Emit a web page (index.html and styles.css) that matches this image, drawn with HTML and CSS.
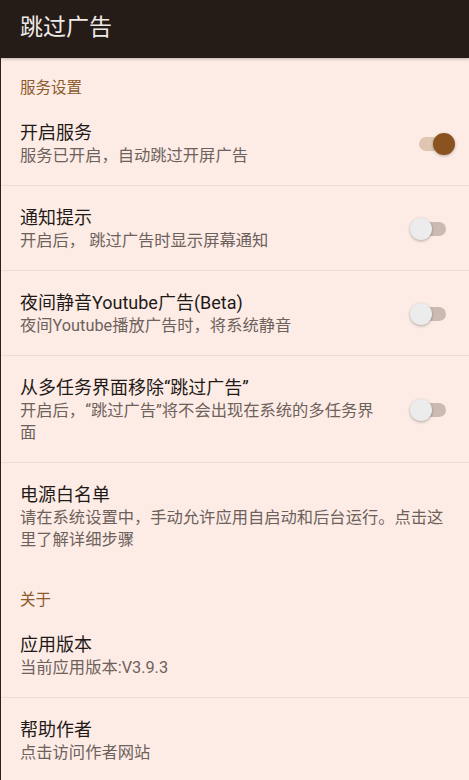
FILE: index.html
```html
<!DOCTYPE html>
<html lang="zh-CN">
<head>
    <meta charset="UTF-8">
    <meta name="viewport" content="width=device-width, initial-scale=1.0">
    <title>跳过广告</title>
    <link rel="stylesheet" href="styles.css">
</head>
<body>
    <div class="app">
        <div class="toolbar">
            <h1>跳过广告</h1>
        </div>

        <div class="prefs">
            <div class="category">服务设置</div>

            <div class="pref">
                <div class="pref-text">
                    <div class="pref-title">开启服务</div>
                    <div class="pref-summary">服务已开启，自动跳过开屏广告</div>
                </div>
                <span class="switch on"><span class="track"></span><span class="thumb"></span></span>
            </div>

            <div class="pref">
                <div class="pref-text">
                    <div class="pref-title">通知提示</div>
                    <div class="pref-summary">开启后， 跳过广告时显示屏幕通知</div>
                </div>
                <span class="switch"><span class="track"></span><span class="thumb"></span></span>
            </div>

            <div class="pref">
                <div class="pref-text">
                    <div class="pref-title">夜间静音Youtube广告(Beta)</div>
                    <div class="pref-summary">夜间Youtube播放广告时，将系统静音</div>
                </div>
                <span class="switch"><span class="track"></span><span class="thumb"></span></span>
            </div>

            <div class="pref">
                <div class="pref-text">
                    <div class="pref-title">从多任务界面移除“跳过广告”</div>
                    <div class="pref-summary">开启后，“跳过广告”将不会出现在系统的多任务界面</div>
                </div>
                <span class="switch"><span class="track"></span><span class="thumb"></span></span>
            </div>

            <div class="pref last">
                <div class="pref-text">
                    <div class="pref-title">电源白名单</div>
                    <div class="pref-summary">请在系统设置中，手动允许应用自启动和后台运行。点击这里了解详细步骤</div>
                </div>
            </div>

            <div class="category">关于</div>

            <div class="pref">
                <div class="pref-text">
                    <div class="pref-title">应用版本</div>
                    <div class="pref-summary">当前应用版本:V3.9.3</div>
                </div>
            </div>

            <div class="pref last">
                <div class="pref-text">
                    <div class="pref-title">帮助作者</div>
                    <div class="pref-summary">点击访问作者网站</div>
                </div>
            </div>
        </div>
    </div>
</body>
</html>
```

FILE: styles.css
```css
body {
    margin: 0;
    padding: 0;
    font-family: Roboto, "Noto Sans CJK SC", sans-serif;
    background-color: #fdece6;
}
.app {
    min-height: 780px;
    border-left: 1px solid #2a211c;
    background-color: #fdece6;
}
.toolbar {
    height: 58px;
    background-color: #261c17;
    display: flex;
    align-items: center;
    padding-left: 19px;
    box-shadow: 0 1px 3px rgba(0,0,0,0.25);
    position: relative;
}
.toolbar h1 {
    margin: 0;
    font-size: 23px;
    font-weight: normal;
    color: #eeeae8;
    line-height: 30px;
    padding-bottom: 3px;
}
.category {
    height: 43px;
    box-sizing: border-box;
    padding: 19px 0 0 19px;
    font-size: 15.5px;
    line-height: 22px;
    color: #8d5a2c;
}
.pref {
    display: flex;
    align-items: center;
    padding: 20px 13px 18px 19px;
    border-bottom: 1px solid #eddbd4;
}
.pref.last {
    border-bottom: none;
    padding-bottom: 19px;
}
.pref-text {
    flex: 1;
    padding-right: 15px;
}
.pref.last .pref-text {
    padding-right: 0;
}
.pref-title {
    font-size: 18px;
    line-height: 24px;
    color: #1f1a17;
}
.pref-summary {
    font-size: 16.3px;
    line-height: 22px;
    color: #6d615b;
}
.switch {
    flex-shrink: 0;
    position: relative;
    width: 46px;
    height: 22px;
    margin-left: 20px;
}
.switch .track {
    position: absolute;
    left: 9px;
    top: 4px;
    width: 27px;
    height: 14px;
    border-radius: 7px;
    background-color: #cbbab2;
}
.switch .thumb {
    position: absolute;
    left: 0;
    top: 0;
    width: 22px;
    height: 22px;
    border-radius: 50%;
    background-color: #ececec;
    box-shadow: 0 1px 3px rgba(0,0,0,0.3);
}
.switch.on .track {
    background-color: #e0c5b0;
}
.switch.on .thumb {
    left: 23px;
    background-color: #8a521f;
}
```
